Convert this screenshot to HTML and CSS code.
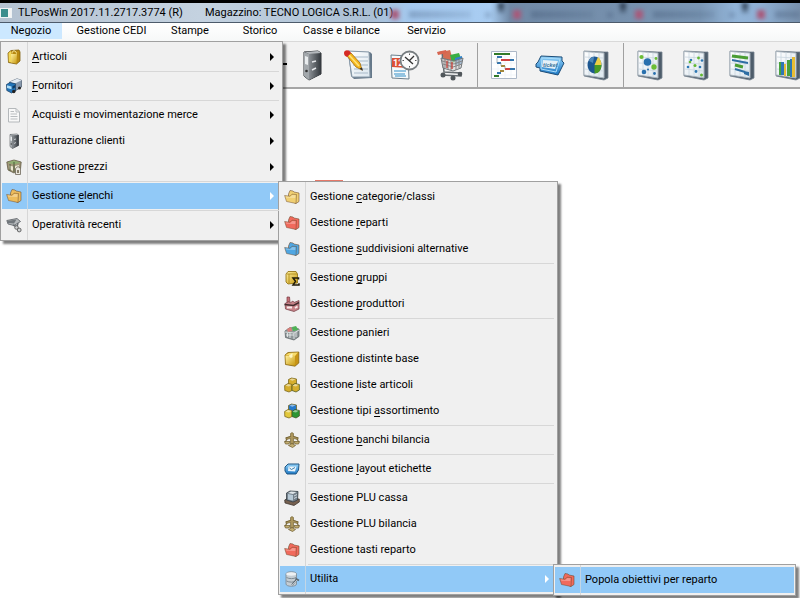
FILE: index.html
```
<!DOCTYPE html>
<html lang="it">
<head>
  <meta charset="UTF-8">
  <title>TLPosWin 2017.11.2717.3774 (R)</title>
  <meta name="viewport" content="width=device-width, initial-scale=1.0">
  <link rel="stylesheet" href="styles.css">
</head>
<body>

  <!-- Icon library -->
  <svg class="icon-defs" aria-hidden="true">
    <defs>
      <linearGradient id="gold" x1="0" y1="0" x2="1" y2="1">
        <stop offset="0" stop-color="#fff0a0"/><stop offset="1" stop-color="#c89a10"/>
      </linearGradient>
      <linearGradient id="steel" x1="0" y1="0" x2="1" y2="0">
        <stop offset="0" stop-color="#8b9095"/><stop offset="1" stop-color="#33383d"/>
      </linearGradient>
      <linearGradient id="sky" x1="0" y1="0" x2="0" y2="1">
        <stop offset="0" stop-color="#8fd0f8"/><stop offset="1" stop-color="#1e78c4"/>
      </linearGradient>
      <linearGradient id="paper" x1="0" y1="0" x2="1" y2="1">
        <stop offset="0" stop-color="#ffffff"/><stop offset="1" stop-color="#dbe6ee"/>
      </linearGradient>

      <symbol id="folder" viewBox="0 0 16 16">
        <path d="M4.500 5 6 1.500 9 2 10 3 15 4 15 12.500 12 14.500 4.500 11z" fill="currentColor" stroke="#6b4a2c" stroke-opacity=".7" stroke-width=".8"/>
        <path d="M.6 6.500 6 7.200 8 5.200 12.500 5.500 12 14.500 2.500 12.500z" fill="currentColor" stroke="#6b4a2c" stroke-opacity=".6" stroke-width=".8"/>
        <path d="M1.500 7.300 6.300 8 8.300 6 11.500 6.300 11.300 9 2.500 8.800z" fill="#fff" opacity=".3"/>
      </symbol>
      <symbol id="box" viewBox="0 0 16 16">
        <path d="M2 4 5 1.500 13 1 14 3 14 12 10.500 15 2.500 13.500z" fill="#b98a12" stroke="#80600c" stroke-width=".8"/>
        <path d="M5 5 11 5 10.500 14.500 5 13.500z" fill="url(#gold)"/>
        <path d="M2.500 4 5 2 5.500 13.500 2.800 12.800z" fill="#f3d85a"/>
        <path d="M6 4.500C6 1 10 1 10.500 4.500" fill="none" stroke="#fff1a8"/>
      </symbol>
      <symbol id="truck" viewBox="0 0 16 16">
        <path d="M3.500 4 11 .8 15.600 2.300 15.600 9 9 13 4 8z" fill="#8798ac" stroke="#46586c" stroke-width=".7"/>
        <path d="M3.500 4 11 .8 15.600 2.300 9 5.500z" fill="#e2eaf2"/>
        <path d="M.5 6.500 4 4.500 9.500 5.800 9.500 13 5.500 15 .8 12.500z" fill="#2274b8" stroke="#173b60" stroke-width=".7"/>
        <path d="M1 7.300 5.500 8.500 5.500 11.300 1 10z" fill="#aedcf6"/>
        <path d="M6.500 8.300 9 7 9 9.500 6.500 11z" fill="#123b62"/>
        <circle cx="7.800" cy="13.500" r="1.700" fill="#222"/><circle cx="13.500" cy="10" r="1.500" fill="#222"/>
      </symbol>
      <symbol id="page" viewBox="0 0 16 16">
        <path d="M2.500 1.500H10L13.500 5V15H2.500z" fill="#f8f8f8" stroke="#b4b8bb"/>
        <path d="M10 1.500V5H13.500M4.500 7H11M4.500 9.500H11.500M4.500 12H11.500M4.500 4.500H8" fill="none" stroke="#b9bdc0"/>
      </symbol>
      <symbol id="binder" viewBox="0 0 32 32">
        <path d="M8 3 22 2 25 4 25 25 13 31 8 27z" fill="#4a4f54" stroke="#2f3337"/>
        <path d="M8 3 13 5 13 31 8 27z" fill="#a3a8ac"/>
        <path d="M13 5 25 4 25 25 13 31z" fill="url(#steel)"/>
        <path d="M9 7 12 8V16L9 15z" fill="#e9ecee"/>
        <circle cx="10.500" cy="22" r="1.300" fill="#333"/>
        <path d="M16 13 20 12M16 21 20 19" stroke="#e4e7ea" stroke-width="1.500"/>
        <path d="M9 3 22 2 25 4 13 5z" fill="#b5b9bd"/>
      </symbol>
      <symbol id="prices" viewBox="0 0 16 16">
        <path d="M.8 3 8 1 15.200 3 14.500 10 8 14 2 11z" fill="#a29778" stroke="#554d38" stroke-width=".7"/>
        <path d="M1.500 3.500 8 1.500 14.500 3.500 8 5.500z" fill="#8fae71"/>
        <path d="M3 6.500 7 7.500V12L3.500 10zM9 7 13 6 13 9 9 11z" fill="#ece7d2"/>
        <path d="M8 3V13M4 5V12" stroke="#4f5a3c"/>
        <path d="M9.500 9.500 12 7.500 14.500 9.500V15.500H9.500z" fill="#e9e6dc" stroke="#6d675a" stroke-width=".8"/>
        <path d="M11 11H13V14H11z" fill="#887f6a"/>
      </symbol>
      <symbol id="camera" viewBox="0 0 16 16">
        <path d="M.8 3.500 11 1.500 14.500 4.500 8 8.500 2 7z" fill="#b6babd" stroke="#555b60" stroke-width=".8"/>
        <path d="M1 4 10.500 2.500 8 6.500 2 6z" fill="#70767b"/>
        <path d="M7 8 11 10 12 6" fill="none" stroke="#656b70" stroke-width="1.500"/>
        <circle cx="10.500" cy="10.500" r="1.800" fill="#ced1d3" stroke="#666"/>
        <circle cx="13.200" cy="13" r="1.900" fill="#ced1d3" stroke="#666"/>
      </symbol>
      <symbol id="group" viewBox="0 0 16 16">
        <path d="M2 4 4 1.500 12 1.500 13.500 4V13L4 14 2 12z" fill="url(#gold)" stroke="#8c6a08" stroke-width=".8"/>
        <path d="M3 4H13M5 4V13" stroke="#a88615" stroke-width=".8"/>
        <path d="M14.500 9.500V8H9L11.500 11.300 9 15H15V13.300" fill="none" stroke="#201b08" stroke-width="1.500"/>
      </symbol>
      <symbol id="factory" viewBox="0 0 16 16">
        <path d="M3 7 3 1H5.500L6 6" fill="#c76f76" stroke="#75383f" stroke-width=".7"/>
        <path d="M1 7.500 5 5.500 6 7 9 5 10 6.500 15 4.500V13L10 15.500 1.500 13z" fill="#c9848a" stroke="#713a40" stroke-width=".7"/>
        <path d="M.5 8.500 9.500 9.500 15 6.500" fill="none" stroke="#422c2e" stroke-width="1.500"/>
        <path d="M3 11.500H8M11 12 13.500 10.500" stroke="#f8eaea" stroke-width="1.800"/>
      </symbol>
      <symbol id="basket" viewBox="0 0 16 16">
        <path d="M1 6 6 2.500 15 4 15 11.500 10 15 1.500 12.500z" fill="#8f9799" stroke="#545c5f" stroke-width=".7"/>
        <path d="M3 4 7 2 8 6 4 7z" fill="#d9807a"/><path d="M8 2 12 1 14.500 5 9 6z" fill="#4fb256"/>
        <path d="M1 7 10 8 15 5M10 8V14M3.500 8V12M6 8V13M12 7V12M2 10H10" fill="none" stroke="#eef1f1" stroke-width=".8"/>
      </symbol>
      <symbol id="carton" viewBox="0 0 16 16">
        <path d="M1 4 4 1.500 14.800 1 14.800 12 11 15.200 1.500 13.500z" fill="#c79416" stroke="#876711" stroke-width=".8"/>
        <path d="M1.500 4.500 11 5V14.500L2 13z" fill="url(#gold)"/>
        <path d="M1.500 4 5 2 14 1.500 11 5z" fill="#f7dc6c"/>
        <path d="M5 4.500 8.500 2 8.500 6 7 7 5.500 6z" fill="#fff6c4"/>
      </symbol>
      <symbol id="cubes" viewBox="0 0 16 16">
        <path class="cube-top" d="M4.500 2.500 7.500 1 12.500 2 12.500 7.500 8.500 9 4.500 7.500z" stroke="#6e5b10" stroke-width=".7"/>
        <path class="cube-left" d="M.6 8.500 4 6.500 8 7.500 8 13.500 5 15 .8 13.500z" stroke="#6e5b10" stroke-width=".7"/>
        <path class="cube-right" d="M8 8.500 11 6.500 15.400 7.500 15.400 13 12 15 8 13.500z" stroke="#405020" stroke-width=".7"/>
        <path d="M5.500 2.700 8 1.500 11.500 2.300 8.500 3.800zM1.500 8.700 4 7 7.500 7.800 5 9.500zM8.500 8.700 11 7 14.500 7.800 12 9.500z" fill="#fff" opacity=".5"/>
      </symbol>
      <symbol id="scales" viewBox="0 0 16 16">
        <path d="M8 1V13M1.500 6 8 4 14.500 6M3.500 6 1 10.500M12.500 6 15 10.500" fill="none" stroke="#776536" stroke-width="1.100"/>
        <path d="M6.500 1.500 8 .5 9.500 1.500V4.500L14 6V7.500L9.500 6.500V12H6.500V6.500L2 7.500V6L6.500 4.500z" fill="#ab955b" stroke="#6b5a2c" stroke-width=".6"/>
        <path d="M.5 9.500H6L5 12H1.500zM10 9.500H15.500L14.500 12H11zM4.500 13.500 8 11.500 11.500 13.500 8.500 15.500z" fill="#c2ad71" stroke="#6b5a2c" stroke-width=".7"/>
      </symbol>
      <symbol id="label" viewBox="0 0 16 16">
        <path d="M1 6 4 3 15 3 14.500 9 12 13 3 13 1 10z" fill="url(#sky)" stroke="#205783"/>
        <path d="M4.500 5.500 12.500 5.500 11 10.500 4 10z" fill="#eaf5fc"/>
        <path d="M5.500 7 7.500 8.500 11 6.500" fill="none" stroke="#3d7ba8"/>
      </symbol>
      <symbol id="register" viewBox="0 0 16 16">
        <path d="M.7 10 4 8 15.300 9 15.300 12 10 15.500 1 13z" fill="#75604f" stroke="#342c26" stroke-width=".7"/>
        <path d="M2.500 3 6 1 14 1.500 13.500 10 9 12 2.500 10z" fill="#74808a" stroke="#343d45" stroke-width=".8"/>
        <path d="M4 4 9 5 9 10.500 4 9.500z" fill="#b6c8d5"/><path d="M4 3 7 1.500 12.500 2 9 4z" fill="#e0e6ea"/>
        <path d="M10 6 13 4.500M10 8.500 13 7" stroke="#cbd6de"/>
      </symbol>
      <symbol id="tools" viewBox="0 0 16 16">
        <path d="M2 3C2 0 12.500 0 12.500 3V13C12.500 16 2 16 2 13z" fill="#c4cdd4" stroke="#7b8790" stroke-width=".8"/>
        <ellipse cx="7.200" cy="3" rx="5" ry="1.700" fill="#edf1f4"/>
        <path d="M2.500 6.500C5 8 10 8 12 6.500M2.500 10C5 11.500 10 11.500 12 10" fill="none" stroke="#7d8a94"/>
        <path d="M8 14 13 8M11.500 7.500 15 9.500" stroke="#5b6872" stroke-width="1.800"/><path d="M8 14 13 9" stroke="#e2e8ec" stroke-width=".7"/>
      </symbol>

      <symbol id="notes" viewBox="0 0 32 32">
        <path d="M6 2 28 3 30 5 30 29 12 30 9 27z" fill="#66798a"/>
        <path d="M6 2 27 3 28 28 10 28z" fill="url(#paper)" stroke="#8799a8"/>
        <path d="M10 8H26M11 12H26M11 16H26M12 20H26M12 24H26" stroke="#a9bac9"/>
        <path d="M5 7 9 4 18 14 20 21 14 18z" fill="#f4b81d" stroke="#a46b0a" stroke-width=".8"/>
        <path d="M7 6 17 17" stroke="#ffe37c" stroke-width="1.500"/>
        <path d="M2 4C2 1 7 0 9 4L5 8C3 7 2 6 2 4z" fill="#d52a24"/><path d="M17.500 19.500 21 22 20 18.500z" fill="#333"/>
      </symbol>
      <symbol id="schedule" viewBox="0 0 32 32">
        <path d="M3 6 20 7 21 30 4 29z" fill="#f5fafc" stroke="#6b7f8c"/>
        <path d="M4 9 20 9 20 19 4 18z" fill="#dc5136"/>
        <text x="5" y="17" class="calendar-day">12</text>
        <path d="M6 22H18M6 25H17M7 27H18" stroke="#73b3d8" stroke-width="1.500"/>
        <circle cx="21.500" cy="11.500" r="9" fill="#fbfbfb" stroke="#777d80" stroke-width="1.800"/>
        <path d="M17 8 25 15M21.500 11.500 26 7" fill="none" stroke="#333" stroke-width="1.300"/>
        <path d="M21.500 4.500V6M21.500 17V18.500M14.500 11.500H16M27 11.500H28.500" stroke="#555"/>
      </symbol>
      <symbol id="cart" viewBox="0 0 32 32">
        <path d="M8 3 16 1 19 11 10 12z" fill="#d56d52"/><path d="M16 6 25 4 28 12 18 14z" fill="#3aae43"/>
        <path d="M21 9 28 7 28 15 21 16z" fill="#3282cc"/>
        <path d="M4 4 8 3 10 23 27 24 27 27 7 26" fill="none" stroke="#666c70" stroke-width="1.500"/>
        <path d="M3 3 12 1 13 4 4 6z" fill="#d76550"/>
        <path d="M7 9 20 12 29 9 27 19 19 22 9 19z" fill="#d8d6d5" fill-opacity=".7" stroke="#70777b"/>
        <path d="M8 12 20 15 28 12M9 15 19 18 28 15M11 10V19M14 11V20M17 11V21M22 12V21M25 11V19" fill="none" stroke="#858585"/>
        <path d="M13 12V19M18 13V20" stroke="#c35049" stroke-width="1.500"/>
        <circle cx="9" cy="26" r="2.500" fill="#50565a"/><circle cx="19" cy="29" r="2.500" fill="#50565a"/><circle cx="26" cy="25" r="2.300" fill="#50565a"/>
      </symbol>
      <symbol id="gantt" viewBox="0 0 32 32">
        <path d="M3.500 2.500H28.500V29.500H3.500z" fill="#fff" stroke="#adb8c7"/>
        <path d="M4 8H28M4 14H28M4 20H28M4 26H28M10 3V29M17 3V29M23 3V29" stroke="#edf2f7" stroke-width=".8"/>
        <path d="M6 5H22M6 27H11" stroke="#327a28" stroke-width="2"/>
        <path d="M9 8H14M22 11H26M9 14H13M22 20H27M9 24H13" stroke="#3475ad" stroke-width="2"/>
        <path d="M13 11H22M17 20H22" stroke="#cf4141" stroke-width="2"/>
        <path d="M13 17H17M12 22H16" stroke="#a3883b" stroke-width="2"/>
        <path d="M9 9V14M13 14V17M17 17V20" fill="none" stroke="#8b979c" stroke-width=".7"/>
      </symbol>
      <symbol id="ticket" viewBox="0 0 32 32">
        <path d="M2 15 4 13 7 7 28 8 28 12 30 14 24 26 6 22 6 19 2 18z" fill="url(#sky)" stroke="#1c4d78"/>
        <path d="M8 9 26 10 22 23 7 20z" fill="none" stroke="#a9dcfa"/>
        <path d="M9 11 24 12 21 20 8 18z" fill="#e5f0f7"/>
        <text x="9" y="18" class="ticket-text">ticket</text>
      </symbol>
      <symbol id="chart-board" viewBox="0 0 32 32">
        <path d="M4 2 24 3 28 3 28 29 24 31 4 27z" fill="#4e5d6b" stroke="#778490" stroke-width=".8"/>
        <path d="M4 2.500 24 4 24 29 4 26z" fill="url(#paper)" stroke="#a7b2bb"/>
        <path d="M5 8 23 9M5 14 23 15M5 20 23 22M9 3V26M14 3V27M19 4V28" stroke="#c9d6df" stroke-width=".8"/>
      </symbol>
      <symbol id="pie" viewBox="0 0 32 32">
        <use href="#chart-board"/>
        <ellipse cx="14.500" cy="16" rx="7" ry="8.500" fill="#1d5791"/>
        <path d="M14.500 16 18 8Q21 10 21.500 16z" fill="#edcf45"/>
        <path d="M14.500 16H21.500C21.500 21 18.500 24.500 14.500 24.500z" fill="#4b9b24"/>
        <path d="M9 12C10 8 13 8 14 8L13 14z" fill="#4c87b9"/>
      </symbol>
      <symbol id="bubbles" viewBox="0 0 32 32">
        <use href="#chart-board"/>
        <circle cx="13.500" cy="13" r="3.800" fill="#2870ae"/><circle cx="10" cy="23" r="2.300" fill="#2870ae"/>
        <circle cx="20" cy="18" r="2.700" fill="#6bbd36"/><circle cx="7.500" cy="8" r="2.100" fill="#6bbd36"/>
        <circle cx="22" cy="9.500" r="1.400" fill="#6bbd36"/><circle cx="20.500" cy="24.500" r="1.400" fill="#2870ae"/><circle cx="14" cy="20.500" r="1" fill="#2870ae"/>
      </symbol>
      <symbol id="scatter" viewBox="0 0 32 32">
        <use href="#chart-board"/>
        <g fill="#2d78b4"><circle cx="11" cy="11" r="1.300"/><circle cx="22" cy="11.500" r="1.300"/><circle cx="8" cy="18" r="1.300"/><circle cx="20" cy="18" r="1.300"/><circle cx="16" cy="22.500" r="1.400"/></g>
        <g fill="#62b832"><circle cx="18.500" cy="9" r="1.400"/><circle cx="10" cy="13" r="1.300"/><circle cx="15" cy="16.500" r="1.500"/><circle cx="21.500" cy="26" r="1.500"/></g>
      </symbol>
      <symbol id="bars" viewBox="0 0 32 32">
        <use href="#chart-board"/>
        <path d="M6 7 22 9M9 16 17 18" stroke="#4a9d33" stroke-width="3"/>
        <path d="M6 11 22 14M9 20 19 23" stroke="#2c6da3" stroke-width="2"/>
        <path d="M18 22 23 23V27L18 25z" fill="#2c6da3"/>
      </symbol>
      <symbol id="columns" viewBox="0 0 32 32">
        <use href="#chart-board"/>
        <path d="M7 13H9V26H7zM15 11H18V27H15z" fill="#48a23b"/><path d="M9 13H12V26H9z" fill="#2e77b5"/>
        <path d="M12 15H14V27H12zM20 8H23V28H20z" fill="#e7bd35"/><path d="M18 10H20V28H18z" fill="#2e77b5"/>
      </symbol>
    </defs>
  </svg>

  <header class="titlebar">
    <span class="app-icon"></span>
    <span class="app-name">TLPosWin 2017.11.2717.3774 (R)</span>
    <span class="store-name">Magazzino: TECNO LOGICA S.R.L. (01)</span>
    <span class="glass" aria-hidden="true"><i></i><i></i><i></i><i></i></span>
  </header>

  <nav class="menubar" aria-label="Menu principale">
    <div class="menubar-entry">
      <button class="menubar-button open" aria-expanded="true">Negozio</button>
      <ul class="menu menu-main">
        <li><button class="item"><svg class="icon"><use href="#box"/></svg><span><u>A</u>rticoli</span></button></li>
        <li class="separator"></li>
        <li><button class="item"><svg class="icon"><use href="#truck"/></svg><span><u>F</u>ornitori</span></button></li>
        <li class="separator"></li>
        <li><button class="item"><svg class="icon"><use href="#page"/></svg><span>Acquisti e movimentazione merce</span></button></li>
        <li><button class="item"><svg class="icon"><use href="#binder"/></svg><span>Fatturazione clienti</span></button></li>
        <li><button class="item"><svg class="icon"><use href="#prices"/></svg><span>Gestione <u>p</u>rezzi</span></button></li>
        <li class="separator"></li>
        <li>
          <button class="item active" aria-expanded="true"><svg class="icon amber"><use href="#folder"/></svg><span>Gestione <u>e</u>lenchi</span></button>
          <ul class="menu submenu menu-lists">
            <li><button class="item"><svg class="icon yellow"><use href="#folder"/></svg><span>Gestione <u>c</u>ategorie/classi</span></button></li>
            <li><button class="item"><svg class="icon red"><use href="#folder"/></svg><span>Gestione <u>r</u>eparti</span></button></li>
            <li><button class="item"><svg class="icon blue"><use href="#folder"/></svg><span>Gestione <u>s</u>uddivisioni alternative</span></button></li>
            <li class="separator"></li>
            <li><button class="item"><svg class="icon"><use href="#group"/></svg><span>Gestione <u>g</u>ruppi</span></button></li>
            <li><button class="item"><svg class="icon"><use href="#factory"/></svg><span>Gestione <u>p</u>roduttori</span></button></li>
            <li class="separator"></li>
            <li><button class="item"><svg class="icon"><use href="#basket"/></svg><span>Gestione panieri</span></button></li>
            <li><button class="item"><svg class="icon"><use href="#carton"/></svg><span>Gestione distinte base</span></button></li>
            <li><button class="item"><svg class="icon cubes-gold"><use href="#cubes"/></svg><span>Gestione <u>l</u>iste articoli</span></button></li>
            <li><button class="item"><svg class="icon cubes-mixed"><use href="#cubes"/></svg><span>Gestione tipi <u>a</u>ssortimento</span></button></li>
            <li class="separator"></li>
            <li><button class="item"><svg class="icon"><use href="#scales"/></svg><span>Gestione <u>b</u>anchi bilancia</span></button></li>
            <li class="separator"></li>
            <li><button class="item"><svg class="icon"><use href="#label"/></svg><span>Gestione <u>l</u>ayout etichette</span></button></li>
            <li class="separator"></li>
            <li><button class="item"><svg class="icon"><use href="#register"/></svg><span>Gestione PLU cassa</span></button></li>
            <li><button class="item"><svg class="icon"><use href="#scales"/></svg><span>Gestione PLU bilancia</span></button></li>
            <li><button class="item"><svg class="icon red"><use href="#folder"/></svg><span>Gestione tasti reparto</span></button></li>
            <li class="separator"></li>
            <li>
              <button class="item active has-arrow" aria-expanded="true"><svg class="icon"><use href="#tools"/></svg><span>Utilita</span></button>
              <ul class="menu submenu menu-tools">
                <li><button class="item active"><svg class="icon red"><use href="#folder"/></svg><span>Popola obiettivi per reparto</span></button></li>
              </ul>
            </li>
          </ul>
        </li>
        <li class="separator"></li>
        <li><button class="item"><svg class="icon"><use href="#camera"/></svg><span>Operatività recenti</span></button></li>
      </ul>
    </div>
    <button class="menubar-button">Gestione CEDI</button>
    <button class="menubar-button">Stampe</button>
    <button class="menubar-button">Storico</button>
    <button class="menubar-button">Casse e bilance</button>
    <button class="menubar-button">Servizio</button>
  </nav>

  <div class="toolbar">
    <button class="tool-dropdown" aria-label="Altre opzioni"></button>
    <button class="tool" aria-label="Archivio"><svg><use href="#binder"/></svg></button>
    <button class="tool" aria-label="Note"><svg><use href="#notes"/></svg></button>
    <button class="tool" aria-label="Scadenze"><svg><use href="#schedule"/></svg></button>
    <button class="tool" aria-label="Carrello"><svg><use href="#cart"/></svg></button>
    <span class="tool-separator"></span>
    <button class="tool" aria-label="Pianificazione"><svg><use href="#gantt"/></svg></button>
    <button class="tool" aria-label="Ticket"><svg><use href="#ticket"/></svg></button>
    <button class="tool" aria-label="Grafico a torta"><svg><use href="#pie"/></svg></button>
    <span class="tool-separator"></span>
    <button class="tool" aria-label="Grafico a bolle"><svg><use href="#bubbles"/></svg></button>
    <button class="tool" aria-label="Grafico a dispersione"><svg><use href="#scatter"/></svg></button>
    <button class="tool" aria-label="Grafico a barre"><svg><use href="#bars"/></svg></button>
    <button class="tool" aria-label="Istogramma"><svg><use href="#columns"/></svg></button>
  </div>

  <main class="workspace">
    <div class="workspace-mark"></div>
  </main>

</body>
</html>
```
FILE: styles.css
```
* {
  box-sizing: border-box;
}

body {
  margin: 0;
  min-height: 100vh;
  display: flex;
  flex-direction: column;
  overflow: hidden;
  background: #fff;
  color: #000;
  font: 11px/16px Roboto, "Noto Sans", sans-serif;
}

button {
  margin: 0;
  padding: 0;
  border: 0;
  background: none;
  color: inherit;
  font: inherit;
}

.icon-defs {
  position: absolute;
  width: 0;
  height: 0;
}

/* Title bar */
.titlebar {
  display: flex;
  align-items: center;
  height: 23px;
  border-top: 3px solid #000;
  border-bottom: 1px solid #4d5b6b;
  background: linear-gradient(to right, #b4c2d1 0, #c4d2e0 200px, #abc0d5 370px, #a4c8ee 410px, #a9cdf2 490px, #7089a6 510px, #7690ad 620px, #7a96b4 700px, #92b4d8 735px, #8fb0d4 760px, #7890ac 100%);
  white-space: nowrap;
}

.app-icon {
  width: 12px;
  height: 10px;
  margin-right: 6px;
  border: 1px solid #eef3f5;
  background: linear-gradient(to right, #3b8d8d 70%, #f4f4f4 70%);
}

.app-name {
  width: 187px;
}

.store-name {
  width: 184px;
}

/* Tabs of the window behind, seen through the glass */
.glass {
  flex: 1;
  display: flex;
  height: 100%;
  overflow: hidden;
  filter: blur(2px);
}

.glass i {
  flex: none;
  width: 122px;
  background:
    linear-gradient(#a8597a, #a8597a) 2px 7px / 8px 9px no-repeat,
    linear-gradient(to right, rgba(40, 60, 90, 0.25), rgba(40, 60, 90, 0.1)) 20px 8px / 62px 7px no-repeat,
    linear-gradient(rgba(40, 60, 90, 0.2), rgba(40, 60, 90, 0.2)) 96px 9px / 6px 6px no-repeat,
    linear-gradient(#1c2a3c, rgba(40, 55, 75, 0.3)) 109px 0 / 6px 10px no-repeat;
}

/* Menu bar */
.menubar {
  display: grid;
  grid-template-columns: 62px 99px 58px 82px 81px 89px;
  height: 18px;
  background: linear-gradient(#fff, #f6f8f8);
}

.menubar-entry {
  position: relative;
  z-index: 1;
}

.menubar-button {
  width: 100%;
  height: 16px;
  white-space: nowrap;
}

.menubar-button.open {
  background: #cce8ff;
}

/* Drop-down menus */
.menu {
  position: absolute;
  margin: 0;
  padding: 2px 1px;
  border: 1px solid #a0a0a0;
  background: linear-gradient(to right, transparent 26px, #d7d7d7 26px, #d7d7d7 27px, transparent 27px) #f0f0f0;
  box-shadow: 3px 3px 2px rgba(0, 0, 0, 0.5);
  list-style: none;
}

.menu li {
  position: relative;
}

.menu-main {
  top: 100%;
  left: 0;
  width: 283px;
}

.submenu {
  top: -2px;
  left: calc(100% - 3px);
}

.menu-lists {
  width: 280px;
}

.menu-tools {
  width: 243px;
}

.item {
  display: flex;
  align-items: center;
  width: 100%;
  height: 26px;
  padding: 0 7px 0 4px;
  text-align: left;
  white-space: nowrap;
}

.item span {
  flex: 1;
  margin-left: 5px;
  padding-left: 5px;
}

.item u {
  text-underline-offset: 2px;
}

.item.active {
  background: linear-gradient(to right, transparent 25px, #c3d6e6 25px, #c3d6e6 26px, transparent 26px) #91c9f7;
}

.menu-main > li > .item::after,
.item.has-arrow::after {
  content: "";
  border: 4px solid transparent;
  border-right: 0;
  border-left: 4px solid #000;
}

.item.active[aria-expanded]::after {
  border-left-color: #fff;
}

.menu .separator {
  height: 3px;
  padding: 1px 2px 1px 28px;
}

.separator::before {
  content: "";
  display: block;
  height: 1px;
  background: #d7d7d7;
}

.icon {
  flex: none;
  width: 16px;
  height: 16px;
}

.amber { color: #edbc5c; }
.yellow { color: #f0cf72; }
.red { color: #f16a5c; }
.blue { color: #4fa6e2; }

.cube-top { fill: var(--top); }
.cube-left { fill: var(--left); }
.cube-right { fill: var(--right); }

.cubes-gold {
  --top: #d5ae2d;
  --left: #d5ae2d;
  --right: #d5ae2d;
}

.cubes-mixed {
  --top: #2579cb;
  --left: #e2c83c;
  --right: #2c9633;
}

/* Toolbar */
.toolbar {
  display: flex;
  align-items: center;
  height: 48px;
  padding-left: 283px;
  border-top: 1px solid #d9d9d9;
  border-bottom: 2px solid #a6a6a6;
  background: #f2f2f2;
  overflow: hidden;
}

.tool-dropdown {
  flex: none;
  width: 6px;
  height: 3px;
  background: linear-gradient(#000, #000) 0 0 / 4px 2px no-repeat;
}

.tool {
  flex: none;
  width: 46px;
  height: 32px;
}

.tool svg {
  display: block;
  width: 32px;
  height: 32px;
  margin: 0 auto;
}

.tool-separator {
  flex: none;
  width: 1px;
  height: 44px;
  margin: 0 3px 0 4px;
  background: #a0a0a0;
}

.calendar-day {
  fill: #fff;
  font: bold 9px Roboto, sans-serif;
}

.ticket-text {
  fill: #45799f;
  font: bold italic 6px Roboto, sans-serif;
}

/* Document area */
.workspace {
  flex: 1;
  padding: 91px 0 0 315px;
}

.workspace-mark {
  width: 28px;
  height: 12px;
  background: #e57868;
}
```
